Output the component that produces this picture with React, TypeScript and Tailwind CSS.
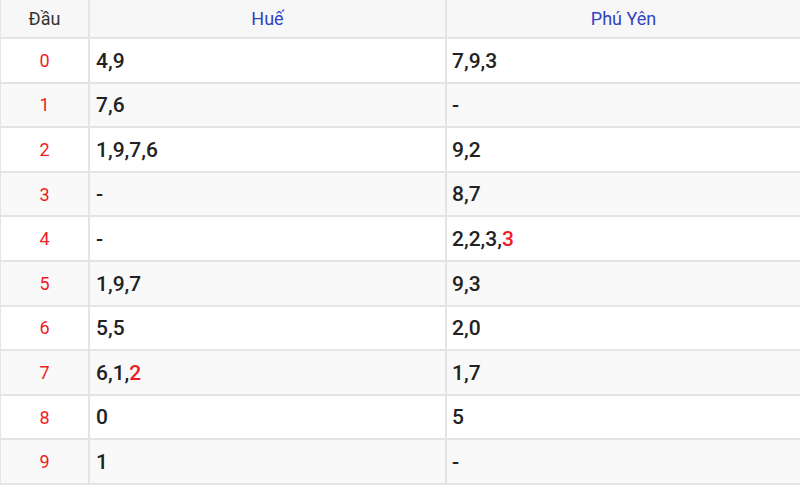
const ROWS: { head: string; hue: string[]; phuYen: string[] }[] = [
  { head: "0", hue: ["4", "9"], phuYen: ["7", "9", "3"] },
  { head: "1", hue: ["7", "6"], phuYen: [] },
  { head: "2", hue: ["1", "9", "7", "6"], phuYen: ["9", "2"] },
  { head: "3", hue: [], phuYen: ["8", "7"] },
  { head: "4", hue: [], phuYen: ["2", "2", "3", "3*"] },
  { head: "5", hue: ["1", "9", "7"], phuYen: ["9", "3"] },
  { head: "6", hue: ["5", "5"], phuYen: ["2", "0"] },
  { head: "7", hue: ["6", "1", "2*"], phuYen: ["1", "7"] },
  { head: "8", hue: ["0"], phuYen: ["5"] },
  { head: "9", hue: ["1"], phuYen: [] },
];

// "*" marks the special prize digit, shown in red
function Digits({ list }: { list: string[] }) {
  if (list.length === 0) return <span>-</span>;
  return (
    <span>
      {list.map((d, i) => (
        <span key={i}>
          {d.endsWith("*") ? (
            <span className="text-[#ee1c25]">{d.slice(0, -1)}</span>
          ) : (
            d
          )}
          {i < list.length - 1 ? "," : ""}
        </span>
      ))}
    </span>
  );
}

export default function App() {
  const cell = "flex items-center border-b-2 border-[#e3e4e6]";

  return (
    <div
      className="w-[800px] h-[485px] overflow-hidden bg-white"
      style={{ fontFamily: "Roboto, 'Liberation Sans', sans-serif" }}
    >
      <div className="grid h-full grid-cols-[89px_357px_1fr] grid-rows-[39px_repeat(10,1fr)] border-l border-[#e3e4e6]">
        <div className={`${cell} justify-center border-r-2 bg-[#f7f7f7] text-[18px] text-[#333]`}>
          Đầu
        </div>
        <div className={`${cell} justify-center border-r-2 bg-[#f7f7f7] text-[18px] text-[#2f44c2]`}>
          Huế
        </div>
        <div className={`${cell} justify-center bg-[#f7f7f7] text-[18px] text-[#2f44c2]`}>
          Phú Yên
        </div>

        {ROWS.map((row, i) => {
          const bg = i % 2 === 1 ? "bg-[#f9f9f9]" : "bg-white";
          const last = i === ROWS.length - 1 ? "border-b-0" : "";
          return [
            <div
              key={`h${i}`}
              className={`${cell} ${bg} ${last} justify-center border-r-2 text-[18px] text-[#ee1c25]`}
            >
              {row.head}
            </div>,
            <div
              key={`a${i}`}
              className={`${cell} ${bg} ${last} border-r-2 pl-[6px] pt-[2px] text-[21px] font-medium text-[#222]`}
            >
              <Digits list={row.hue} />
            </div>,
            <div
              key={`b${i}`}
              className={`${cell} ${bg} ${last} pl-[5px] pt-[2px] text-[21px] font-medium text-[#222]`}
            >
              <Digits list={row.phuYen} />
            </div>,
          ];
        })}
      </div>
    </div>
  );
}
